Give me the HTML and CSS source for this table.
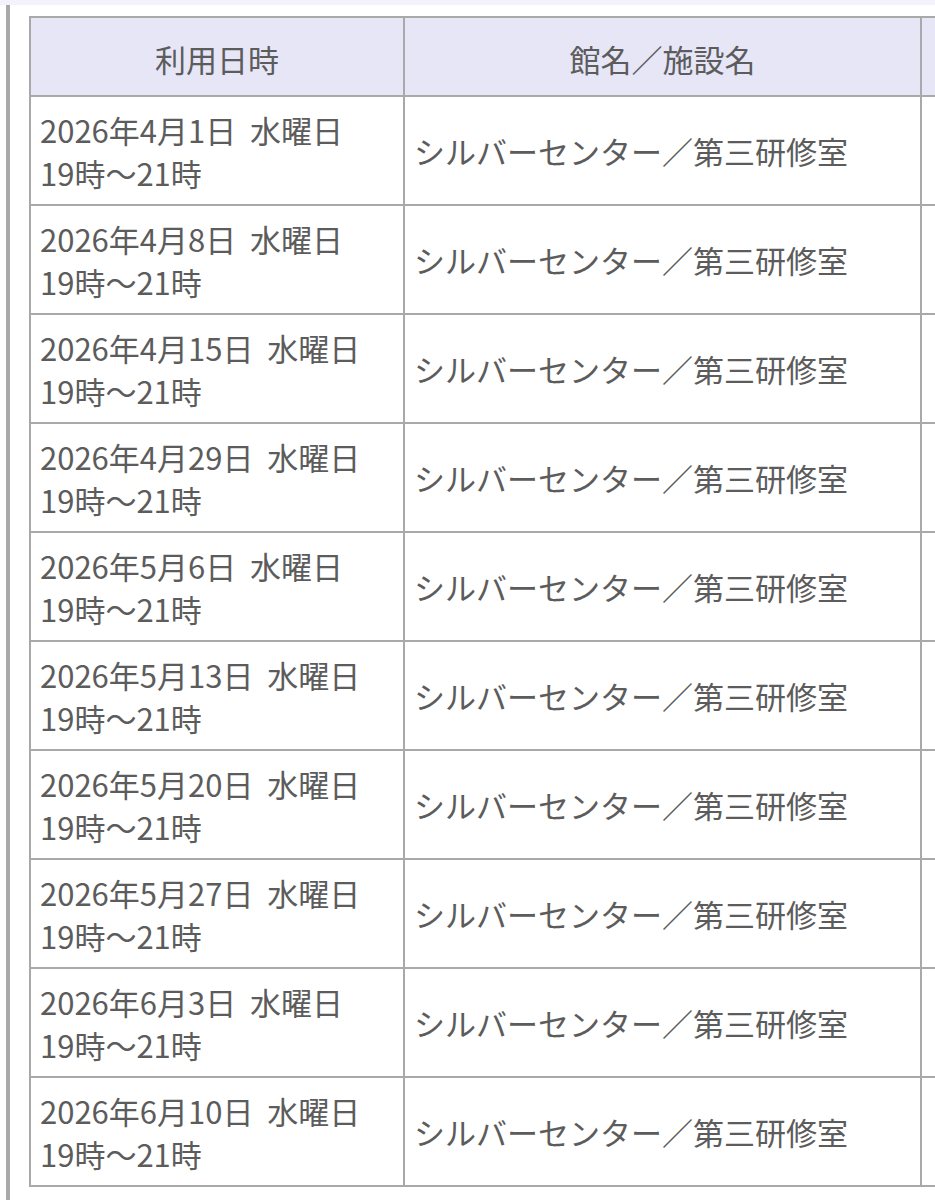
FILE: index.html
```html
<!DOCTYPE html>
<html lang="ja">
<head>
<meta charset="utf-8">
<title>利用日時一覧</title>
<link rel="stylesheet" href="styles.css">
</head>
<body>
<div class="top-strip"></div>
<div class="frame">
  <table class="schedule">
    <colgroup>
      <col class="col-date">
      <col class="col-place">
      <col class="col-extra">
    </colgroup>
    <thead>
      <tr>
        <th>利用日時</th>
        <th>館名／施設名</th>
        <th class="extra"></th>
      </tr>
    </thead>
    <tbody>
      <tr><td class="date">2026年4月1日&nbsp;&nbsp;水曜日<br>19時～21時</td><td class="place">シルバーセンター／第三研修室</td><td class="extra"></td></tr>
      <tr><td class="date">2026年4月8日&nbsp;&nbsp;水曜日<br>19時～21時</td><td class="place">シルバーセンター／第三研修室</td><td class="extra"></td></tr>
      <tr><td class="date">2026年4月15日&nbsp;&nbsp;水曜日<br>19時～21時</td><td class="place">シルバーセンター／第三研修室</td><td class="extra"></td></tr>
      <tr><td class="date">2026年4月29日&nbsp;&nbsp;水曜日<br>19時～21時</td><td class="place">シルバーセンター／第三研修室</td><td class="extra"></td></tr>
      <tr><td class="date">2026年5月6日&nbsp;&nbsp;水曜日<br>19時～21時</td><td class="place">シルバーセンター／第三研修室</td><td class="extra"></td></tr>
      <tr><td class="date">2026年5月13日&nbsp;&nbsp;水曜日<br>19時～21時</td><td class="place">シルバーセンター／第三研修室</td><td class="extra"></td></tr>
      <tr><td class="date">2026年5月20日&nbsp;&nbsp;水曜日<br>19時～21時</td><td class="place">シルバーセンター／第三研修室</td><td class="extra"></td></tr>
      <tr><td class="date">2026年5月27日&nbsp;&nbsp;水曜日<br>19時～21時</td><td class="place">シルバーセンター／第三研修室</td><td class="extra"></td></tr>
      <tr><td class="date">2026年6月3日&nbsp;&nbsp;水曜日<br>19時～21時</td><td class="place">シルバーセンター／第三研修室</td><td class="extra"></td></tr>
      <tr><td class="date">2026年6月10日&nbsp;&nbsp;水曜日<br>19時～21時</td><td class="place">シルバーセンター／第三研修室</td><td class="extra"></td></tr>
    </tbody>
  </table>
</div>
</body>
</html>
```
FILE: styles.css
```css
html, body {
  margin: 0;
  padding: 0;
  background: #ffffff;
}
body {
  width: 935px;
  height: 1200px;
  overflow: hidden;
  font-family: "Noto Sans CJK JP", "Noto Sans", sans-serif;
  color: #5c5c5c;
}
.top-strip {
  height: 5px;
  background: #f4f2fb;
}
.frame {
  margin-left: 6px;
  border-left: 4px solid #a9a9a9;
  padding: 11px 0 0 19px;
  height: 1195px;
  box-sizing: border-box;
  overflow: hidden;
}
.schedule {
  border-collapse: collapse;
  table-layout: fixed;
  width: 906px;
  font-size: 31px;
  line-height: 43px;
}
.col-date { width: 374px; }
.col-place { width: 517px; }
.col-extra { width: 15px; }
.schedule th,
.schedule td {
  border: 2px solid #a9a9a9;
}
.schedule th {
  background: #e6e6f7;
  font-weight: normal;
  height: 79px;
  padding: 4px 9px 0;
  box-sizing: border-box;
  text-align: center;
  vertical-align: middle;
}
.schedule td {
  height: 109px;
  box-sizing: border-box;
  padding: 9px;
  vertical-align: middle;
  white-space: nowrap;
}
.schedule .extra {
  border-right: none;
  padding: 0;
}
.date {
  text-align: left;
}
.place {
  text-align: left;
}
```
